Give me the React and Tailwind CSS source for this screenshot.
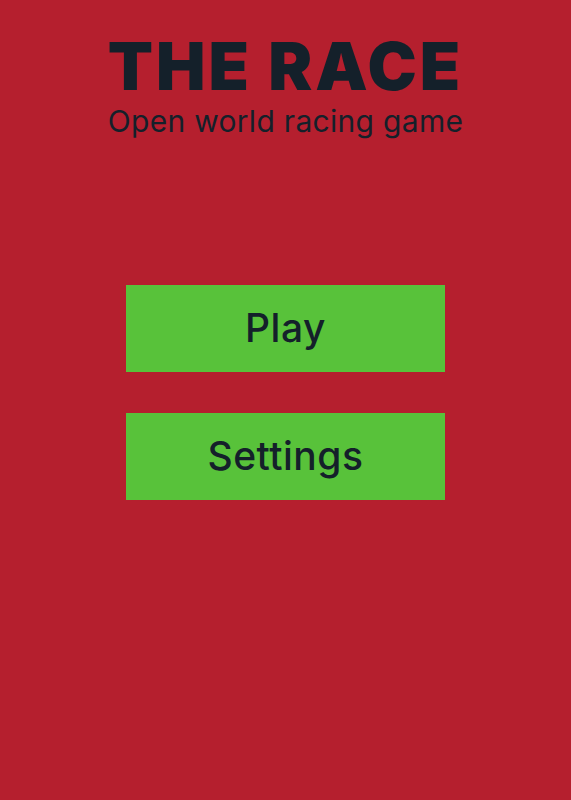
export default function App() {
  return (
    <div className="min-h-[800px] w-full bg-[#b51f2e] text-[#14202a] font-['Inter','Noto_Sans',sans-serif]">
      <div className="flex flex-col items-center pt-[30px]">
        <h1 className="text-[66px] leading-[72px] font-black tracking-[3px]">THE RACE</h1>
        <p className="text-[30px] leading-[36px] font-normal tracking-[0.3px] mt-[1px]">Open world racing game</p>
      </div>
      <div className="flex flex-col items-center gap-[41px] mt-[146px]">
        <button className="w-[319px] h-[87px] bg-[#58c23a] text-[39px] font-medium tracking-[0.5px]">Play</button>
        <button className="w-[319px] h-[87px] bg-[#58c23a] text-[39px] font-medium tracking-[0.5px]">Settings</button>
      </div>
    </div>
  );
}
